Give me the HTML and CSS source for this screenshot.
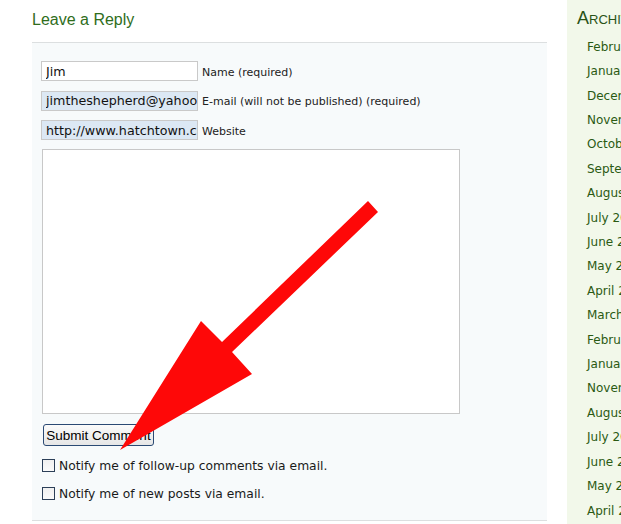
FILE: index.html
```html
<!DOCTYPE html>
<html>
<head>
<meta charset="utf-8">
<link rel="stylesheet" href="styles.css">
</head>
<body>
<div class="page">
  <main class="main">
    <h2 class="reply-title">Leave a Reply</h2>
    <form class="reply-panel">
      <div class="field">
        <input class="text-input" type="text" value="Jim">
        <label class="field-label">Name (required)</label>
      </div>
      <div class="field">
        <input class="text-input filled" type="text" value="jimtheshepherd@yahoo.com">
        <label class="field-label">E-mail (will not be published) (required)</label>
      </div>
      <div class="field last">
        <input class="text-input filled" type="text" value="http://www.hatchtown.com">
        <label class="field-label">Website</label>
      </div>
      <textarea class="comment-box"></textarea>
      <button class="submit-btn" type="button">Submit Comment</button>
      <div class="notify-row first"><span class="checkbox"></span><span>Notify me of follow-up comments via email.</span></div>
      <div class="notify-row"><span class="checkbox"></span><span>Notify me of new posts via email.</span></div>
    </form>
  </main>
  <aside class="sidebar">
    <h3 class="side-title">Archives</h3>
    <ul class="archive-list">
      <li>February 2010</li>
      <li>January 2010</li>
      <li>December 2009</li>
      <li>November 2009</li>
      <li>October 2009</li>
      <li>September 2009</li>
      <li>August 2009</li>
      <li>July 2009</li>
      <li>June 2009</li>
      <li>May 2009</li>
      <li>April 2009</li>
      <li>March 2009</li>
      <li>February 2009</li>
      <li>January 2009</li>
      <li>November 2008</li>
      <li>August 2008</li>
      <li>July 2008</li>
      <li>June 2008</li>
      <li>May 2008</li>
      <li>April 2008</li>
    </ul>
  </aside>
</div>
<svg class="arrow-overlay" width="621" height="524" viewBox="0 0 621 524">
  <polygon points="368,201 378,212 232,352 252,374 120,450 201,321 222,342" fill="#fe0808"/>
</svg>
</body>
</html>
```
FILE: styles.css
```css
html, body {
  margin: 0;
  padding: 0;
  background: #ffffff;
  overflow: hidden;
}
body {
  width: 621px;
  height: 524px;
  position: relative;
  font-family: "DejaVu Sans", Verdana, sans-serif;
}
.page {
  display: flex;
  gap: 20px;
  padding-left: 32px;
  height: 524px;
  overflow: hidden;
}
.main {
  width: 515px;
  flex: none;
}
.reply-title {
  margin: 0 0 12px 0;
  padding-top: 10px;
  font-family: "Liberation Sans", Arial, sans-serif;
  font-weight: normal;
  font-size: 16px;
  line-height: 20px;
  color: #2f6d1c;
}
.reply-panel {
  background: #f7fafb;
  border-top: 1px solid #dcdfe0;
  border-bottom: 1px solid #dcdfe0;
  padding: 18px 0 0 9px;
  height: 459px;
  box-sizing: content-box;
  display: flex;
  flex-direction: column;
  align-items: flex-start;
}
.field {
  display: flex;
  align-items: center;
  gap: 4px;
  margin-bottom: 9.5px;
}
.field.last {
  margin-bottom: 9px;
}
.text-input {
  box-sizing: border-box;
  width: 157px;
  height: 20px;
  margin: 0;
  padding: 0 0 0 4px;
  border: 1px solid #c9c9c9;
  background: #ffffff;
  font-family: "DejaVu Sans", Verdana, sans-serif;
  font-size: 12.7px;
  color: #111;
  outline: none;
}
.text-input.filled {
  background: #dce8f4;
}
.field-label {
  font-size: 11px;
  color: #222;
  padding-top: 2px;
}
.comment-box {
  box-sizing: border-box;
  width: 418px;
  height: 265px;
  margin: 0 0 10px 1px;
  border: 1px solid #c8c8c8;
  background: #ffffff;
  resize: none;
  padding: 0;
}
.submit-btn {
  box-sizing: border-box;
  width: 111px;
  height: 22px;
  margin: 0 0 10px 2px;
  padding: 0;
  border: 1px solid #2b4a74;
  border-radius: 3px;
  background: linear-gradient(#fbfbfb, #e6e6e6);
  font-family: "Liberation Sans", Arial, sans-serif;
  font-size: 13.5px;
  color: #000;
}
.notify-row {
  display: flex;
  align-items: center;
  gap: 4px;
  height: 17px;
  margin-bottom: 11px;
  margin-left: 1px;
  font-size: 12.3px;
  color: #1a1a1a;
}
.notify-row.first {
  margin-top: 1px;
}
.checkbox {
  box-sizing: border-box;
  width: 13px;
  height: 13px;
  border: 1px solid #2c3f58;
  background: linear-gradient(#f0f0f0, #fafafa);
  flex: none;
}
.sidebar {
  flex: none;
  width: 200px;
  background: #f2f8ea;
  padding-left: 10px;
  box-sizing: border-box;
  height: 524px;
}
.side-title {
  margin: 0;
  padding-top: 8px;
  font-family: "Liberation Sans", Arial, sans-serif;
  font-variant: small-caps;
  font-weight: normal;
  font-size: 18px;
  line-height: 20px;
  color: #2a5317;
  white-space: nowrap;
}
.archive-list {
  list-style: none;
  margin: 6.8px 0 0 0;
  padding: 0 0 0 10px;
}
.archive-list li {
  font-size: 12px;
  line-height: 24.4px;
  color: #2b5a13;
  white-space: nowrap;
}
.arrow-overlay {
  position: absolute;
  left: 0;
  top: 0;
  pointer-events: none;
}
```
